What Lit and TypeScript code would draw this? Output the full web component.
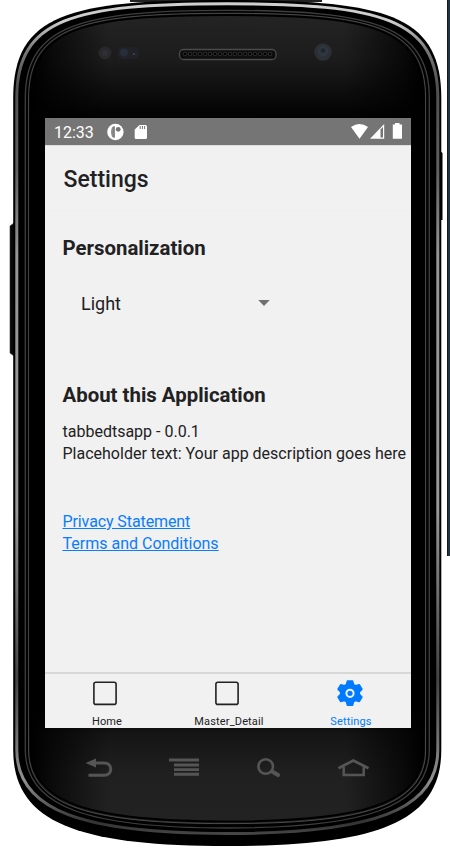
import { LitElement, html, svg, css } from "lit";
import { customElement } from "lit/decorators.js";

// Closed outline of the phone body for a given set of edges.
const outline = (l: number, t: number, r: number, b: number, k = 20, q = 20) =>
  `M${l} 98C${l} ${t + k} ${l + 56} ${t} 227 ${t}S${r} ${t + k} ${r} 98V750C${r} ${b - q - 3} ${r - 66} ${b} 227 ${b}S${l} ${b - q - 3} ${l} 750Z`;

@customElement("phone-shell")
class PhoneShell extends LitElement {
  static styles = css`
    :host { display: block; width: 450px; height: 848px; }
    svg { display: block; }
  `;
  render() {
    const holes = Array.from({ length: 18 }, (_, i) => svg`<circle cx=${185 + i * 5} cy="54" r="1.8" fill="#000" stroke="#444" stroke-width=".6"/>`);
    return html`<svg width="450" height="848" viewBox="0 0 450 848">
      <defs>
        <linearGradient id="face" x1="0" y1="13" x2="0" y2="823" gradientUnits="userSpaceOnUse">
          <stop offset="0" stop-color="#242424"/><stop offset=".06" stop-color="#1b1b1b"/>
          <stop offset=".125" stop-color="#030303"/><stop offset=".14" stop-color="#000"/>
          <stop offset=".86" stop-color="#000"/><stop offset=".89" stop-color="#151515"/>
          <stop offset=".94" stop-color="#202020"/><stop offset="1" stop-color="#222"/>
        </linearGradient>
        <linearGradient id="side">
          <stop offset="0" stop-color="#000"/><stop offset=".05" stop-color="#000" stop-opacity=".7"/>
          <stop offset=".2" stop-color="#000" stop-opacity="0"/><stop offset=".8" stop-color="#000" stop-opacity="0"/>
          <stop offset=".95" stop-color="#000" stop-opacity=".7"/><stop offset="1" stop-color="#000"/>
        </linearGradient>
        <linearGradient id="rim" x1="0" y1="0" x2="0" y2="848" gradientUnits="userSpaceOnUse">
          <stop offset="0" stop-color="#d0d0d0"/><stop offset=".025" stop-color="#ccc"/>
          <stop offset=".06" stop-color="#777"/>
          <stop offset=".1" stop-color="#505050"/><stop offset=".2" stop-color="#606060"/>
          <stop offset=".3" stop-color="#969696"/><stop offset=".6" stop-color="#999"/>
          <stop offset=".8" stop-color="#444"/><stop offset=".92" stop-color="#909090"/>
          <stop offset=".97" stop-color="#333"/><stop offset="1" stop-color="#5c5c5c"/>
        </linearGradient>
      </defs>
      <rect x="447" y="0" width="3" height="556" fill="#243340"/>
      <rect x="447" y="0" width="1" height="556" fill="#111a23"/>
      <path d="M14 223L10 226V353L14 356Z" fill="#080808" stroke="#333" stroke-width=".6"/>
      <path d="M440 151L442.500 153V220H440Z" fill="#000"/>
      <rect x="130" y="0" width="192" height="2" fill="#222"/>
      <path d=${outline(13.2, 0, 441.3, 846, 14)} fill="#000"/>
      <path d=${outline(16.8, 3.8, 437.8, 833.5, 15)} fill="none" stroke="url(#rim)" stroke-width="3"/>
      <path d=${outline(20, 7, 434, 830)} fill="#000"/>
      <path d=${outline(25.3, 10.3, 429.3, 828, 15, 17)} fill="#020202" stroke="#3e3e3e" stroke-width="1.3"/>
      <path d=${outline(28.6, 13.3, 425.6, 823.6, 12, 13)} fill="url(#face)" stroke="#4a4a4a" stroke-width="1"/>
      <path d=${outline(30.5, 15, 423.7, 821.5, 12, 13)} fill="url(#side)" stroke="#000" stroke-width="2"/>
      <circle cx="105" cy="53" r="6.500" fill="#29292c"/><circle cx="105" cy="53" r="3" fill="#2f2f36"/>
      <rect x="118" y="47" width="21" height="12" rx="5" fill="#202227"/>
      <circle cx="124" cy="52.500" r="4" fill="#272d3a"/><circle cx="134" cy="54" r="1" fill="#44444a"/>
      <rect x="179.500" y="49.500" width="96.500" height="10" rx="4" fill="#0d0d0d" stroke="#4b4b4b" stroke-width="1.300"/>
      ${holes}
      <circle cx="323" cy="52" r="8.700" fill="#2c2f34"/><circle cx="323" cy="51" r="5.500" fill="#31363e"/><circle cx="323" cy="50.500" r="2.300" fill="#20262f"/>
      <g fill="none" stroke="#555" stroke-width="3">
        <path d="M94 763H104C113 763 113 775.300 104 775.300H88.500"/>
        <path d="M85.500 763L96 758.500V767.500Z" fill="#555" stroke="none"/>
        <path d="M169 760H199M174 765H199M174 769.600H199M174 774.300H199" stroke-width="2.900"/>
        <circle cx="265.700" cy="766.500" r="7.300" stroke-width="2.600"/>
        <path d="M272 771.500L278 775" stroke-width="4.200" stroke-linecap="round"/>
        <path d="M338.500 768.200L353.300 760.500L368.500 768.200" stroke-width="2.800"/>
        <path d="M343.700 767V774.900H363.700V767" stroke-width="2.500"/>
      </g>
    </svg>`;
  }
}

@customElement("app-root")
class AppRoot extends LitElement {
  static styles = css`
    :host { display: block; position: relative; width: 450px; height: 848px; overflow: hidden; background: #fff; font-family: Roboto, sans-serif; color: #212123; }
    .screen { position: absolute; left: 45px; top: 118px; width: 366px; height: 610px; background: #f1f1f1; display: flex; flex-direction: column; white-space: nowrap; }
    .status { height: 27px; border-bottom: 1px solid #ddd; background: #757575; color: #fff; display: flex; align-items: center; }
    .time { width: 53px; padding-left: 9px; font-size: 16px; line-height: 27px; padding-top: 1px; }
    .bar { height: 65px; box-sizing: border-box; border-bottom: 1px solid #efefef; padding: 1px 0 0 18.500px; font-size: 23px; line-height: 65px; font-weight: 500; }
    .content { flex: 1; padding: 23px 0 0 17.500px; display: flex; flex-direction: column; }
    h2 { margin: 0; font-size: 20.400px; line-height: 28px; font-weight: 700; }
    .select { display: flex; align-items: center; justify-content: space-between; width: 189px; height: 28px; margin: 27px 0 64px 18.500px; font-size: 18px; }
    .about { margin-top: 12px; font-size: 16px; line-height: 22px; }
    .links { margin-top: 46px; font-size: 16px; line-height: 22px; display: flex; flex-direction: column; align-items: flex-start; }
    .privacy { letter-spacing: -.1px; }
    a { color: #0a7cff; text-decoration: underline; }
    .tabs { height: 54px; border-top: 2px solid #d8d8d8; display: grid; grid-template-columns: 124px 120px 122px; font-size: 11px; }
    .tab { display: flex; flex-direction: column; align-items: center; padding-top: 6px; letter-spacing: .15px; }
    .tab svg { margin-left: -4px; }
    .tab span { line-height: 13px; margin-top: 9px; }
    .on { color: #007aff; }
    .on svg { margin-left: 0; }
    .on span { padding-left: 2px; }
  `;
  render() {
    const box = html`<svg width="26" height="26" viewBox="0 0 26 26"><rect x="1.900" y="2.200" width="22.200" height="22.200" rx="2" fill="none" stroke="#222" stroke-width="1.600"/></svg>`;
    return html`
      <phone-shell></phone-shell>
      <div class="screen">
        <div class="status">
          <span class="time">12:33</span>
          <svg width="304" height="27" viewBox="107 118 304 27">
            <circle cx="115.400" cy="132" r="8.200" fill="#fff"/>
            <path d="M114.800 126.200V137.800C112.400 138 111.200 136 111.200 132S112.400 126 114.800 126.200Z" fill="#757575"/>
            <path d="M112.900 127.500V136.500" stroke="#aaa" stroke-width=".7"/>
            <circle cx="118.200" cy="129.300" r="2.400" fill="#757575"/>
            <path d="M139.500 125H145.500Q147 125 147 126.500V137.500Q147 139 145.500 139H136Q134.700 139 134.700 137.500V129.500Z" fill="#fff"/>
            <path d="M140.200 126V129M142.400 126V129M144.600 126V129" stroke="#757575" stroke-width="1"/>
            <path d="M351 127Q359.500 121 368 127L359.500 138.700Z" fill="#fff"/>
            <path d="M384.200 124V138.800H370Z" fill="#fff"/><path d="M380.500 129.500L383 127V137.500H380.500Z" fill="#757575"/>
            <path d="M395 123H399.500V124.500H402V138.800H392.800V124.500H395Z" fill="#fff"/>
          </svg>
        </div>
        <div class="bar">Settings</div>
        <div class="content">
          <h2>Personalization</h2>
          <div class="select"><span>Light</span><svg width="12" height="6" viewBox="0 0 12 6"><path d="M.3 0H11.700L6 6Z" fill="#707070"/></svg></div>
          <h2>About this Application</h2>
          <div class="about"><div>tabbedtsapp - 0.0.1</div><div>Placeholder text: Your app description goes here</div></div>
          <div class="links"><a class="privacy">Privacy Statement</a><a>Terms and Conditions</a></div>
        </div>
        <div class="tabs">
          <div class="tab">${box}<span>Home</span></div>
          <div class="tab">${box}<span>Master_Detail</span></div>
          <div class="tab on"><svg width="26" height="26" viewBox="0 0 26 26">
            <path d="M10.500 1H15.500L16.600 4.700L18.600 5.800L22.300 4.800L24.900 9.200L22.300 12V14.200L24.900 17L22.300 21.400L18.600 20.400L16.600 21.500L15.500 25.200H10.500L9.400 21.500L7.400 20.400L3.700 21.400L1.100 17L3.700 14.200V12L1.100 9.200L3.700 4.800L7.400 5.800L9.400 4.700Z" fill="#007aff" stroke="#007aff" stroke-width="1.600" stroke-linejoin="round"/>
            <circle cx="13" cy="13.300" r="3.600" fill="none" stroke="#f1f1f1" stroke-width="2"/></svg><span>Settings</span></div>
        </div>
      </div>`;
  }
}
